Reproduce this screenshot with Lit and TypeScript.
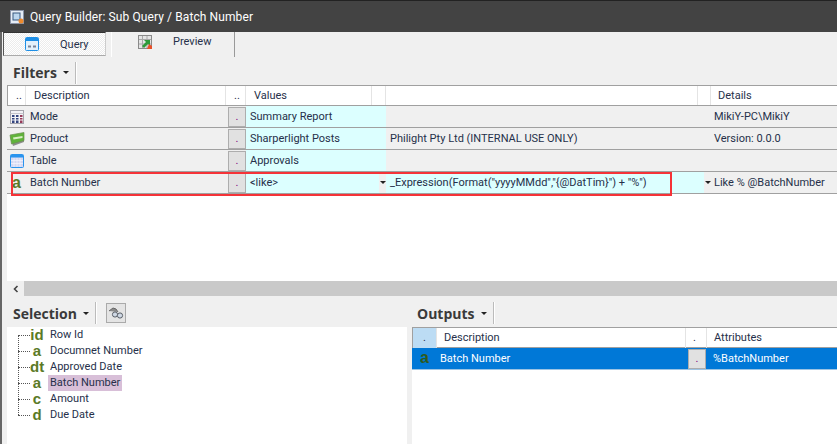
import { LitElement, html, css, svg } from 'lit';
import { customElement } from 'lit/decorators.js';

const filterRows = [
  { icon: 'mode', name: 'Mode', value: 'Summary Report', expr: '', details: 'MikiY-PC\\MikiY' },
  { icon: 'product', name: 'Product', value: 'Sharperlight Posts', expr: 'Philight Pty Ltd (INTERNAL USE ONLY)', details: 'Version: 0.0.0' },
  { icon: 'table', name: 'Table', value: 'Approvals', expr: '', details: '' },
];

const treeItems = [
  { type: 'id', name: 'Row Id' },
  { type: 'a', name: 'Documnet Number' },
  { type: 'dt', name: 'Approved Date' },
  { type: 'a', name: 'Batch Number', selected: true },
  { type: 'c', name: 'Amount' },
  { type: 'd', name: 'Due Date' },
];

const icons: Record<string, unknown> = {
  mode: svg`<svg width="16" height="16" viewBox="0 0 16 16">
    <rect x="1.5" y="1.5" width="13" height="13" fill="#f2f2f6" stroke="#a5a5ad"/>
    <path d="M1.5 4.5h13" stroke="#c5c5cc"/>
    <path d="M3 6h2.5v2H3zM3 9h2.5v1.5H3zM3 11.5h2.5V14H3zM7 6h2.5v2H7zM7 9h2.5v1.5H7zM7 11.5h2.5V14H7z" fill="#33457f"/>
    <path d="M11 6h2.5v2H11zM11 9h2.5v1.5H11zM11 11.5h2.5V14H11z" fill="#963a58"/>
  </svg>`,
  product: svg`<svg width="16" height="16" viewBox="0 0 16 16">
    <path d="M1 5.5L4 15l11-4V8z" fill="#8d8d8d"/>
    <path d="M1 4l14-2.5v8L2.5 13z" fill="#5fb33a" stroke="#6b8f52" stroke-width=".7"/>
    <path d="M4 6.5l9.5-1.6v2L4.5 8.6z" fill="#d8f0c4"/>
  </svg>`,
  table: svg`<svg width="16" height="16" viewBox="0 0 16 16">
    <rect x="1.5" y="1.5" width="13" height="13" rx="1" fill="#d4d8f2" stroke="#2a94ee"/>
    <rect x="2" y="2" width="12" height="2.5" fill="#2a94ee"/>
    <path d="M5 5v9M8 5v9M11 5v9M2 7.5h12M2 10.5h12" stroke="#f2f2fb" stroke-width=".8"/>
  </svg>`,
};

@customElement('app-root')
export class AppRoot extends LitElement {
  static styles = css`
    :host {
      display: block;
      width: 837px;
      height: 444px;
      overflow: hidden;
      background: #f0f0f0;
      font: 11px Roboto, "Liberation Sans", sans-serif;
      color: #26304a;
    }
    .title {
      height: 32px;
      display: flex;
      align-items: center;
      gap: 6px;
      padding-left: 10px;
      box-sizing: border-box;
      background: #434343;
      border-top: 1px solid #222;
      color: #fff;
      font-size: 12px;
      letter-spacing: 0.1px;
    }
    .body {
      height: 412px;
      border-left: 2px solid #666;
      display: flex;
      flex-direction: column;
    }
    .tabs { height: 25px; display: flex; padding-left: 1px; }
    .tab {
      display: flex;
      align-items: center;
      box-sizing: border-box;
      height: 25px;
    }
    .tab.query {
      width: 103px;
      height: 24px;
      gap: 21px;
      padding: 0 0 0 21px;
      border: 1px solid #555;
      border-top-color: #333;
      border-right-color: #ccc;
      border-bottom-color: #aaa;
      background: repeating-conic-gradient(#fff 0 25%, #ececec 0 50%) 0 0 / 2px 2px;
    }
    .tab.preview {
      width: 124px;
      margin-left: 5px;
      gap: 21px;
      padding: 0 0 6px 26px;
      border-left: 1px solid #fff;
      border-right: 1px solid #999;
    }
    .strip {
      height: 28px;
      display: flex;
      align-items: center;
      padding: 3px 0 0 11px;
      box-sizing: border-box;
    }
    .strip b {
      font: bold 14px "Open Sans", sans-serif;
      color: #3a3a3a;
    }
    .caret {
      width: 0;
      height: 0;
      margin-left: 6px;
      border: 3px solid transparent;
      border-top: 3px solid #222;
      border-bottom: 0;
    }
    .sep { width: 1px; height: 22px; margin-left: 6px; background: #bbb; border-right: 1px solid #fff; }
    .find {
      width: 20px;
      height: 20px;
      margin-left: 9px;
      box-sizing: border-box;
      border: 1px solid #aaa;
      background: #e4e4e4;
      display: flex;
      align-items: center;
      justify-content: center;
    }
    .filters {
      position: relative;
      height: 196px;
      margin-left: 5px;
      background: #fff;
      display: flex;
      flex-direction: column;
    }
    .frow {
      display: grid;
      grid-template-columns: 19px 200px 20px 126px 14px 312px 13px 1fr;
      height: 22px;
      box-sizing: border-box;
      border-bottom: 1px solid #a0a0a0;
      background: #f0f0f0;
      line-height: 21px;
    }
    .frow.head {
      height: 21px;
      background: #fff;
      border-top: 1px solid #a0a0a0;
      border-left: 1px solid #a0a0a0;
      grid-template-columns: 18px 200px 20px 126px 14px 312px 13px 1fr;
      line-height: 19px;
    }
    .frow.head > div { border-right: 1px solid #e4e4e4; padding-left: 8px; box-sizing: border-box; }
    .frow.head > div:last-child { border-right: 0; padding-left: 7px; }
    .frow .ic { display: flex; align-items: center; justify-content: center; }
    .name { padding-left: 4px; }
    .btn {
      margin: 1px 0 0 2px;
      background: #e1e1e1;
      border: 1px solid #adadad;
      text-align: center;
      color: #800080;
      line-height: 17px;
      box-sizing: border-box;
    }
    .val { background: #dcffff; padding-left: 4px; white-space: nowrap; }
    .expr { padding-left: 4px; white-space: nowrap; }
    .det { padding-left: 3px; white-space: nowrap; }
    .type {
      font: bold 16px/1 "Liberation Sans", sans-serif;
      color: #5b7a26;
    }
    .arrow {
      display: flex;
      justify-content: flex-end;
      background: #dcffff;
    }
    .arrow span {
      width: 7px;
      background: #f0f0f0;
      display: flex;
      align-items: center;
      justify-content: center;
    }
    .arrow i { border: 3px solid transparent; border-top-color: #222; border-bottom: 0; }
    .cyan { background: #dcffff; }
    .highlight {
      position: absolute;
      left: 4px;
      top: 87px;
      width: 661px;
      height: 24px;
      box-sizing: border-box;
      border: 2px solid #f53338;
    }
    .blank { flex: 1; }
    .scroll { height: 15px; margin-left: 5px; display: flex; background: #c9c9c9; }
    .scroll span {
      width: 17px;
      background: #f0f0f0;
      display: flex;
      align-items: center;
      justify-content: center;
    }
    .lower { flex: 1; display: flex; min-height: 0; }
    .left { width: 405px; display: flex; flex-direction: column; }
    .right { flex: 1; margin-left: 5px; display: flex; flex-direction: column; }
    .left .strip { height: 31px; }
    .right .strip { height: 31px; padding-left: 5px; }
    .tree {
      position: relative;
      flex: 1;
      margin-left: 5px;
      background: #fff;
    }
    .node { display: flex; align-items: center; height: 16px; }
    .dots { width: 12px; margin-left: 11px; border-top: 1px dotted #555; }
    .glyph {
      width: 14px;
      text-align: center;
      white-space: nowrap;
      font: bold 15px/16px "Liberation Sans", sans-serif;
      color: #5b7a26;
    }
    .label { padding: 0 2px; margin-left: 4px; line-height: 16px; }
    .label.sel { background: #d8bfd8; }
    .trunk { position: absolute; left: 11px; top: 8px; height: 80px; border-left: 1px dotted #555; }
    .grid { flex: 1; background: #fff; }
    .orow {
      display: grid;
      grid-template-columns: 25px 249px 21px 1fr;
      height: 22px;
      box-sizing: border-box;
      line-height: 21px;
    }
    .orow.head {
      height: 21px;
      grid-template-columns: 24px 249px 21px 1fr;
      border-top: 1px solid #a0a0a0;
      border-bottom: 1px solid #a0a0a0;
      border-left: 1px solid #a0a0a0;
      line-height: 20px;
    }
    .orow.head > div { border-right: 1px solid #e4e4e4; padding-left: 7px; box-sizing: border-box; }
    .orow.head > div:first-child { background: #bcdcf4; padding-left: 10px; }
    .orow.head > div:last-child { border-right: 0; }
    .orow.item { background: #0078d7; color: #fff; border-bottom: 1px solid #9cc4e4; }
    .orow.item .type { color: #2f5a1a; text-align: center; line-height: 20px; }
    .orow.item .desc { padding-left: 3px; }
    .orow.item .attr { padding-left: 6px; }
    .orow.item .btn { margin: 1px 1px 0 2px; }
  `;

  private renderFilterRow(r: { icon: string; name: string; value: string; expr: string; details: string }) {
    return html`
      <div class="frow">
        <div class="ic">${icons[r.icon]}</div>
        <div class="name">${r.name}</div>
        <div class="btn">.</div>
        <div class="val">${r.value}</div>
        <div class="cyan"></div>
        <div class="expr">${r.expr}</div>
        <div></div>
        <div class="det">${r.details}</div>
      </div>
    `;
  }

  render() {
    return html`
      <div class="title">
        <svg width="14" height="14" viewBox="0 0 14 14">
          <rect x=".5" y=".5" width="13" height="13" fill="#e6edf6" stroke="#8a94a8"/>
          <rect x="3" y="3" width="7" height="7" fill="#bcd6ee" stroke="#39587f"/>
          <circle cx="11" cy="11" r="2.5" fill="#ef8a2c"/>
        </svg>
        <span>Query Builder: Sub Query / Batch Number</span>
      </div>
      <div class="body">
        <div class="tabs">
          <div class="tab query">
            <svg width="14" height="14" viewBox="0 0 14 14">
              <rect x=".5" y=".5" width="13" height="13" rx="1" fill="#e4f1fb" stroke="#1f8fe6"/>
              <rect x="1" y="1" width="12" height="3" fill="#1f8fe6"/>
              <path d="M3 9.5h3M8 9.5h3" stroke="#7a8498" stroke-width="2"/>
            </svg>
            <span>Query</span>
          </div>
          <div class="tab preview">
            <svg width="14" height="14" viewBox="0 0 14 14">
              <rect x=".5" y=".5" width="13" height="13" fill="#e4e4e4" stroke="#8a8a8a"/>
              <path d="M4.5 1v12M9 1v12M1 4.5h12M1 9h12" stroke="#a8a8a8"/>
              <path d="M4 11l4-4-2-2h6v6l-2-2-4 4z" fill="#2e9a3a"/>
              <path d="M9 14l2-5 3 2v3z" fill="#e8502a"/>
            </svg>
            <span>Preview</span>
          </div>
        </div>
        <div class="strip"><b>Filters</b><span class="caret"></span><span class="sep"></span></div>
        <div class="filters">
          <div class="frow head">
            <div>..</div><div>Description</div><div>..</div><div>Values</div><div></div><div></div><div></div><div>Details</div>
          </div>
          ${filterRows.map((r) => this.renderFilterRow(r))}
          <div class="frow">
            <div class="ic"><span class="type">a</span></div>
            <div class="name">Batch Number</div>
            <div class="btn">.</div>
            <div class="val">&lt;like&gt;</div>
            <div class="arrow"><span><i></i></span></div>
            <div class="expr cyan">_Expression(Format("yyyyMMdd","{@DatTim}") + "%")</div>
            <div class="arrow"><span><i></i></span></div>
            <div class="det">Like % @BatchNumber</div>
          </div>
          <div class="blank"></div>
          <div class="highlight"></div>
        </div>
        <div class="scroll">
          <span><svg width="8" height="8" viewBox="0 0 8 8"><path d="M5.5 1L2.5 4l3 3" fill="none" stroke="#444" stroke-width="1.6"/></svg></span>
        </div>
        <div class="lower">
          <div class="left">
            <div class="strip">
              <b>Selection</b><span class="caret"></span><span class="sep"></span>
              <span class="find">
                <svg width="16" height="14" viewBox="0 0 16 14">
                  <path d="M1 5l4-3 3 1 2 3" fill="#8a8a8a" stroke="#666"/>
                  <circle cx="7" cy="8.5" r="2.6" fill="#cfd8e4" stroke="#5a6068"/>
                  <circle cx="12" cy="9.5" r="2.6" fill="#cfd8e4" stroke="#5a6068"/>
                </svg>
              </span>
            </div>
            <div class="tree">
              <span class="trunk"></span>
              ${treeItems.map((t) => html`
                <div class="node">
                  <span class="dots"></span>
                  <span class="glyph">${t.type}</span>
                  <span class="label ${t.selected ? 'sel' : ''}">${t.name}</span>
                </div>`)}
            </div>
          </div>
          <div class="right">
            <div class="strip"><b>Outputs</b><span class="caret"></span><span class="sep"></span></div>
            <div class="grid">
              <div class="orow head"><div>.</div><div>Description</div><div>.</div><div>Attributes</div></div>
              <div class="orow item">
                <span class="type">a</span>
                <div class="desc">Batch Number</div>
                <div class="btn">.</div>
                <div class="attr">%BatchNumber</div>
              </div>
            </div>
          </div>
        </div>
      </div>
    `;
  }
}
